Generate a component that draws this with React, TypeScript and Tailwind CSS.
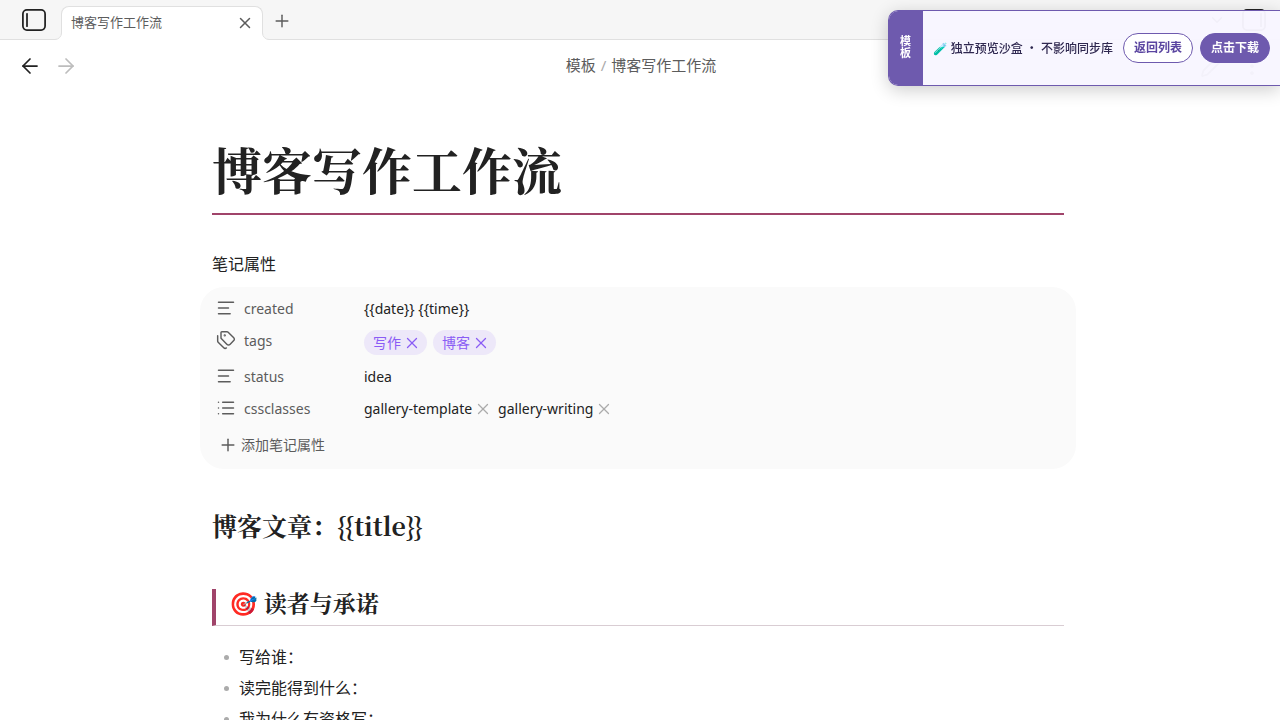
import { ArrowLeft, ArrowRight, ChevronDown, EllipsisVertical, List, Pencil, Plus, Tags, TextAlignStart, X } from "lucide-react";
import type { ReactNode } from "react";

const NOTE_TITLE = "博客写作工作流";

const READER_ITEMS = ["写给谁：", "读完能得到什么：", "我为什么有资格写："];

const serif = "font-['Noto_Serif_CJK_SC','Noto_Serif_SC','Noto_Serif','Liberation_Serif',serif]";

function SidebarIcon({ flipped = false }: { flipped?: boolean }) {
  return (
    <svg
      viewBox="0 0 24 22"
      className={flipped ? "h-[22px] w-6 -scale-x-100" : "h-[22px] w-6"}
      fill="none"
      stroke="currentColor"
      strokeWidth="1.75"
      strokeLinecap="round"
    >
      <rect x="0.9" y="0.9" width="22.2" height="20.2" rx="4" />
      <path d="M5 4.8v12.4" />
    </svg>
  );
}

// Rounded foot that joins the active tab to the line under the tab bar
function TabFoot({ className }: { className: string }) {
  return (
    <svg viewBox="0 0 7 7" className={`absolute bottom-0 size-[7px] ${className}`} fill="none">
      <path d="M0 6.5A6.5 6.5 0 0 0 6.5 0H7v7H0z" fill="#fff" />
      <path d="M0 6.5A6.5 6.5 0 0 0 6.5 0" stroke="#e0e0e0" />
    </svg>
  );
}

function TabBar() {
  return (
    <header className="flex h-10 items-end border-b border-[#e0e0e0] bg-[#f6f6f6] pl-[22px] pr-[14px]">
      <button aria-label="折叠左侧栏" className="mb-2 text-[#222222]">
        <SidebarIcon />
      </button>
      <div className="relative -mb-px ml-[15px] flex h-[34px] w-[202px] items-center justify-between rounded-t-lg border border-b-0 border-[#e0e0e0] bg-white px-2 pb-[2px] text-[13px] text-[#5c5c5c]">
        <TabFoot className="-left-[7px]" />
        <span className="pl-px">{NOTE_TITLE}</span>
        <button aria-label="关闭标签页">
          <X size={18} strokeWidth={2} />
        </button>
        <TabFoot className="-right-[7px] -scale-x-100" />
      </div>
      <button aria-label="新建标签页" className="mb-2 ml-[9px] text-[#5c5c5c]">
        <Plus size={20} strokeWidth={1.75} />
      </button>
      <div className="mb-2 ml-auto flex items-center gap-4 text-[#222222]">
        <button aria-label="标签页列表">
          <ChevronDown size={18} strokeWidth={1.75} />
        </button>
        <button aria-label="展开右侧栏">
          <SidebarIcon flipped />
        </button>
      </div>
    </header>
  );
}

function ViewHeader() {
  return (
    <div className="flex h-[52px] items-center justify-between pl-[18px] pr-4">
      <div className="flex flex-1 items-center gap-3">
        <button aria-label="后退" className="text-[#222222]">
          <ArrowLeft size={24} strokeWidth={1.75} />
        </button>
        <button aria-label="前进" disabled className="text-[#bdbdbd]">
          <ArrowRight size={24} strokeWidth={1.75} />
        </button>
      </div>
      <nav className="flex items-center gap-[5px] pb-[2px] text-[15px] text-[#5c5c5c]">
        <a href="#templates">模板</a>
        <span className="text-[#ababab]">/</span>
        <span>{NOTE_TITLE}</span>
      </nav>
      <div className="flex flex-1 items-center justify-end gap-4 text-[#5c5c5c]">
        <button aria-label="编辑">
          <Pencil size={24} strokeWidth={1.75} />
        </button>
        <button aria-label="更多选项">
          <EllipsisVertical size={24} strokeWidth={1.75} />
        </button>
      </div>
    </div>
  );
}

function PreviewBanner() {
  return (
    <aside className="fixed right-0 top-[10px] z-10 flex h-[76px] overflow-hidden rounded-l-[10px] border border-r-0 border-[#6e5aae] bg-[#f8f6ff]/97 text-xs shadow-[0_4px_18px_rgba(0,0,0,0.2)]">
      <div className="flex w-[34px] items-center justify-center bg-[#6e5aae] pb-[2px] text-[11px] font-bold text-white">
        <span className="w-[11px] leading-3">模板</span>
      </div>
      <div className="flex items-center gap-[7px] px-[10px]">
        <p className="mr-[3px] whitespace-nowrap pt-px font-medium text-[#2f2850]">🧪 独立预览沙盒 ・ 不影响同步库</p>
        <a href="#list" className="rounded-full border border-[#6e5aae] bg-white px-[10px] py-[5px] font-bold leading-[18px] text-[#5a45a0]">
          返回列表
        </a>
        <a href="#download" className="rounded-full border border-[#6e5aae] bg-[#6e5aae] px-[10px] py-[5px] font-bold leading-[18px] text-white">
          点击下载
        </a>
      </div>
    </aside>
  );
}

function Property({ icon, name, children }: { icon: ReactNode; name: string; children: ReactNode }) {
  return (
    <div className="flex items-start">
      <dt className="flex h-8 w-[148px] shrink-0 items-center gap-2 text-[#5c5c5c]">
        <span className="pb-[2px]">{icon}</span>
        {name}
      </dt>
      <dd className="flex min-h-8 items-center">{children}</dd>
    </div>
  );
}

function Tag({ label }: { label: string }) {
  return (
    <span className="flex h-[25px] items-center gap-[2px] rounded-full bg-[#ede8f9] pl-[9px] pr-[6px] text-[#8a5cf5]">
      {label}
      <button aria-label={`移除 ${label}`}>
        <X size={18} strokeWidth={1.75} />
      </button>
    </span>
  );
}

function ListValue({ label }: { label: string }) {
  return (
    <span className="flex items-center gap-[2px]">
      {label}
      <button aria-label={`移除 ${label}`} className="text-[#ababab]">
        <X size={18} strokeWidth={1.75} />
      </button>
    </span>
  );
}

function Properties() {
  return (
    <section>
      <h2 className="text-base leading-6">笔记属性</h2>
      <div className="-mx-3 mt-[11px] rounded-3xl bg-[#fafafa] px-4 pb-2 pt-[6px] text-sm">
        <dl>
          <Property icon={<TextAlignStart size={20} strokeWidth={1.75} />} name="created">
            {"{{date}} {{time}}"}
          </Property>
          <Property icon={<Tags size={20} strokeWidth={1.75} />} name="tags">
            <div className="flex gap-[6px] pb-[6px] pt-[5px]">
              <Tag label="写作" />
              <Tag label="博客" />
            </div>
          </Property>
          <Property icon={<TextAlignStart size={20} strokeWidth={1.75} />} name="status">
            idea
          </Property>
          <Property icon={<List size={20} strokeWidth={1.75} />} name="cssclasses">
            <div className="flex gap-[6px]">
              <ListValue label="gallery-template" />
              <ListValue label="gallery-writing" />
            </div>
          </Property>
        </dl>
        <button className="mt-1 flex h-8 items-center gap-[3px] pl-[2px] text-[#5c5c5c]">
          <Plus size={20} strokeWidth={1.75} />
          添加笔记属性
        </button>
      </div>
    </section>
  );
}

export default function App() {
  return (
    <div className="flex h-screen flex-col bg-white font-['Noto_Sans','Noto_Sans_CJK_SC',sans-serif] text-[#222222]">
      <TabBar />
      <ViewHeader />
      <main className="flex-1 overflow-y-auto pl-8 pr-9 [scrollbar-width:none]">
        <article className="mx-auto max-w-[852px] pb-24 pt-[43px]">
          <h1 className={`${serif} border-b-2 border-[#a0446a] pb-[11px] text-[50px] font-bold leading-[67px]`}>
            {NOTE_TITLE}
          </h1>
          <div className="mt-[37px]">
            <Properties />
          </div>
          <h2 className={`${serif} mt-[38px] text-[25px] font-bold leading-9`}>{"博客文章：{{title}}"}</h2>
          <h3 className={`${serif} mt-[46px] border-b border-l-4 border-b-[#d9cdd3] border-l-[#a0446a] pb-[9px] pl-[13px] text-[23px] font-bold leading-[27px]`}>
            🎯 读者与承诺
          </h3>
          <ul className="mt-4 text-base leading-[31px]">
            {READER_ITEMS.map((item) => (
              <li key={item} className="flex items-center gap-[10px] pl-3">
                <span className="size-[5px] rounded-full bg-[#ababab]" />
                {item}
              </li>
            ))}
          </ul>
        </article>
      </main>
      <PreviewBanner />
    </div>
  );
}
